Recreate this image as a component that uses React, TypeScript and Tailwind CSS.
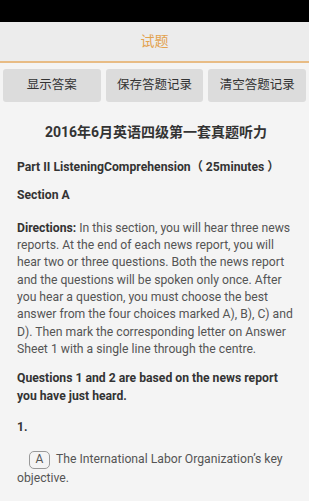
export default function App() {
  return (
    <div className="w-[309px] h-[501px] overflow-hidden bg-[#f4f4f4] font-['Roboto','Noto_Sans_CJK_SC',sans-serif]">
      <div className="h-[22px] bg-black" />
      <div className="h-[39px] bg-[#ececec] flex items-center justify-center text-[14px] text-[#e3a24f]">
        试题
      </div>
      <div className="h-[2px] bg-[#e8bc85]" />
      <div className="flex gap-[5px] px-[3px] pt-[6px]">
        {["显示答案", "保存答题记录", "清空答题记录"].map((t) => (
          <div
            key={t}
            className="flex-1 h-[33px] rounded-[3px] bg-[#dcdcdc] flex items-center justify-center text-[12.5px] text-[#333]"
          >
            {t}
          </div>
        ))}
      </div>
      <div className="pl-[17px] pr-[14px] text-[#555] text-[12.2px] leading-[17.3px]">
        <div className="mt-[22px] text-center font-bold text-[14px] text-[#333]">
          2016年6月英语四级第一套真题听力
        </div>
        <div className="mt-[18px] font-bold text-[#333]">
          Part II ListeningComprehension（ 25minutes ）
        </div>
        <div className="mt-[10px] font-bold text-[#333]">Section A</div>
        <p className="mt-[16px]">
          <span className="font-bold text-[#333]">Directions:</span> In this
          section, you will hear three news reports. At the end of each news
          report, you will hear two or three questions. Both the news report
          and the questions will be spoken only once. After you hear a
          question, you must choose the best answer from the four choices
          marked A), B), C) and D). Then mark the corresponding letter on
          Answer Sheet 1 with a single line through the centre.
        </p>
        <p className="mt-[12px] font-bold text-[#333]">
          Questions 1 and 2 are based on the news report you have just heard.
        </p>
        <div className="mt-[14px] font-bold text-[#333]">1.</div>
        <p className="mt-[14px] leading-[19px]">
          <span className="ml-[12px] mr-[6px] inline-flex items-center justify-center w-[21px] h-[18px] rounded-[5px] border border-[#999] text-[12px] text-[#555] align-middle">
            A
          </span>
          The International Labor Organization’s key objective.
        </p>
      </div>
    </div>
  );
}
